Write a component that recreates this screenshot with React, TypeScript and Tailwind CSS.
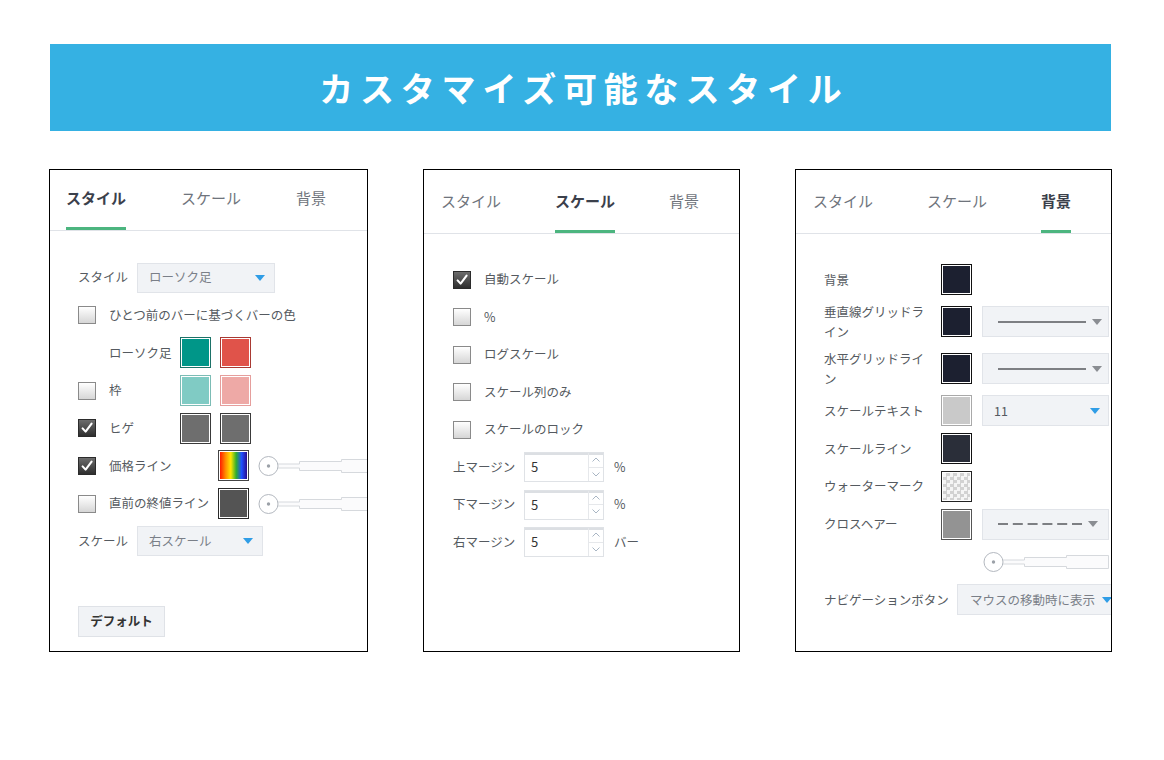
import React from "react";

function Checkbox({ checked }: { checked?: boolean }) {
  if (checked) {
    return (
      <div className="w-[18px] h-[18px] shrink-0 border border-[#2b2b2b] bg-[linear-gradient(to_bottom,#6c6c6c,#2e2e2e)] flex items-center justify-center">
        <svg width="14" height="14" viewBox="0 0 14 14">
          <path d="M2.6 7.4 L5.6 10.6 L11.6 2.6" stroke="#ffffff" strokeWidth="2.1" fill="none" strokeLinecap="round" strokeLinejoin="round" />
        </svg>
      </div>
    );
  }
  return <div className="w-[18px] h-[18px] shrink-0 border border-[#8a8a8a] bg-[linear-gradient(to_bottom,#ffffff,#d6d6d6)]" />;
}

function Swatch({ border, fill }: { border: string; fill: string }) {
  return (
    <div className={`w-[31px] h-[31px] shrink-0 border p-px bg-white ${border}`}>
      <div className={`w-full h-full ${fill}`} />
    </div>
  );
}

function BlueTri() {
  return (
    <svg width="10" height="6" viewBox="0 0 10 6" className="shrink-0">
      <path d="M0 0 H10 L5 6 Z" fill="#2f9de6" />
    </svg>
  );
}

function GrayTri() {
  return (
    <svg width="10" height="6" viewBox="0 0 10 6" className="shrink-0">
      <path d="M0 0 H10 L5 6 Z" fill="#8a8d92" />
    </svg>
  );
}

function Slider() {
  return (
    <svg width="130" height="22" viewBox="0 0 130 22" className="shrink-0">
      <path d="M19.5 9 H41.5 V6.5 H83.5 V4.5 H125.5 V17.5 H83.5 V15.5 H41.5 V13 H19.5" fill="#fbfbfc" stroke="#d6d9dd" />
      <circle cx="10.5" cy="11" r="9.5" fill="#ffffff" stroke="#b3b8bf" />
      <circle cx="10.5" cy="11" r="1.7" fill="#9ca1a8" />
    </svg>
  );
}

function Tabs({ active, tall }: { active: number; tall?: boolean }) {
  const names = ["スタイル", "スケール", "背景"];
  return (
    <div
      className={
        tall
          ? "flex items-start pl-[17px] gap-[54px] pt-[21px] border-b border-[#e0e3e8]"
          : "flex items-start pl-[16px] gap-[55px] pt-[18px] border-b border-[#e0e3e8]"
      }
    >
      {names.map((n, i) => (
        <div key={n} className="flex flex-col">
          <div
            className={
              i === active
                ? "text-[15px] leading-[20px] font-bold text-[#3b404b]"
                : "text-[15px] leading-[20px] text-[#6f747c]"
            }
          >
            {n}
          </div>
          <div className={i === active ? "mt-[19px] h-[3px] bg-[#4cb57f]" : "mt-[19px] h-[3px]"} />
        </div>
      ))}
    </div>
  );
}

function Select({ w, text }: { w: string; text: string }) {
  return (
    <div className={`h-[30px] shrink-0 bg-[#f1f3f6] border border-[#e1e4e9] flex items-center justify-between pl-[11px] pr-[9px] text-[#7a7f88] ${w}`}>
      <span>{text}</span>
      <BlueTri />
    </div>
  );
}

function NumInput() {
  return (
    <div className="w-[80px] h-[30px] shrink-0 border border-[#dfe2e6] shadow-[inset_0_2px_0_#dcdfe3] flex bg-white">
      <div className="flex-1 flex items-center pl-[6px] text-[13px] text-[#333]">5</div>
      <div className="w-[15px] flex flex-col border-l border-[#e6e8eb]">
        <div className="flex-1 flex items-center justify-center border-b border-[#e6e8eb]">
          <svg width="8" height="5" viewBox="0 0 8 5">
            <path d="M0.5 4.5 L4 1 L7.5 4.5" stroke="#a9b6c4" fill="none" strokeWidth="1" />
          </svg>
        </div>
        <div className="flex-1 flex items-center justify-center">
          <svg width="8" height="5" viewBox="0 0 8 5">
            <path d="M0.5 0.5 L4 4 L7.5 0.5" stroke="#a9b6c4" fill="none" strokeWidth="1" />
          </svg>
        </div>
      </div>
    </div>
  );
}

function Panel1() {
  return (
    <div className="w-[319px] h-[483px] shrink-0 border border-black bg-white overflow-hidden">
      <Tabs active={0} />
      <div className="pl-[28px] pt-[31px] flex flex-col gap-[6.7px] text-[12.5px] text-[#555a60]">
        <div className="h-[31px] flex items-center">
          <div className="w-[59px] shrink-0">スタイル</div>
          <Select w="w-[138px]" text="ローソク足" />
        </div>
        <div className="h-[31px] flex items-center">
          <Checkbox />
          <div className="ml-[13px] whitespace-nowrap">ひとつ前のバーに基づくバーの色</div>
        </div>
        <div className="h-[31px] flex items-center">
          <div className="ml-[31px] w-[71px] shrink-0">ローソク足</div>
          <div className="flex gap-[9px]">
            <Swatch border="border-[#1d7268]" fill="bg-[#009688]" />
            <Swatch border="border-[#a93a33]" fill="bg-[#e0534a]" />
          </div>
        </div>
        <div className="h-[31px] flex items-center">
          <Checkbox />
          <div className="ml-[13px] w-[71px] shrink-0">枠</div>
          <div className="flex gap-[9px]">
            <Swatch border="border-[#7cbcb5]" fill="bg-[#80cbc4]" />
            <Swatch border="border-[#e59e9c]" fill="bg-[#eea9a6]" />
          </div>
        </div>
        <div className="h-[31px] flex items-center">
          <Checkbox checked />
          <div className="ml-[13px] w-[71px] shrink-0">ヒゲ</div>
          <div className="flex gap-[9px]">
            <Swatch border="border-[#3a3a3a]" fill="bg-[#6e6e6e]" />
            <Swatch border="border-[#3a3a3a]" fill="bg-[#6e6e6e]" />
          </div>
        </div>
        <div className="h-[31px] flex items-center">
          <Checkbox checked />
          <div className="ml-[13px] w-[109px] shrink-0 whitespace-nowrap">価格ライン</div>
          <Swatch border="border-[#444444]" fill="bg-[linear-gradient(to_right,#ff1a00,#ff8a00,#ffe600,#2fae2f,#1f4fff,#2b0c8c)]" />
          <div className="ml-[9px] shrink-0 flex items-center">
            <Slider />
          </div>
        </div>
        <div className="h-[31px] flex items-center">
          <Checkbox />
          <div className="ml-[13px] w-[109px] shrink-0 whitespace-nowrap">直前の終値ライン</div>
          <Swatch border="border-[#2a2a2a]" fill="bg-[#545454]" />
          <div className="ml-[9px] shrink-0 flex items-center">
            <Slider />
          </div>
        </div>
        <div className="h-[31px] flex items-center">
          <div className="w-[59px] shrink-0">スケール</div>
          <Select w="w-[126px]" text="右スケール" />
        </div>
        <div className="mt-[42px] w-[87px] h-[31px] bg-[#f1f3f6] border border-[#dfe2e7] flex items-center justify-center font-bold text-[#333] text-[12.5px]">
          デフォルト
        </div>
      </div>
    </div>
  );
}

function Panel2() {
  const checks: [string, boolean][] = [
    ["自動スケール", true],
    ["%", false],
    ["ログスケール", false],
    ["スケール列のみ", false],
    ["スケールのロック", false],
  ];
  const inputs: [string, string][] = [
    ["上マージン", "%"],
    ["下マージン", "%"],
    ["右マージン", "バー"],
  ];
  return (
    <div className="w-[317px] h-[483px] shrink-0 border border-black bg-white overflow-hidden">
      <Tabs active={1} tall />
      <div className="pl-[29px] pt-[30.5px] flex flex-col gap-[7.5px] text-[12.5px] text-[#555a60]">
        {checks.map(([t, c]) => (
          <div key={t} className="h-[30px] flex items-center">
            <Checkbox checked={c} />
            <div className="ml-[13px]">{t}</div>
          </div>
        ))}
        {inputs.map(([t, u]) => (
          <div key={t} className="h-[30px] flex items-center">
            <div className="w-[71px] shrink-0">{t}</div>
            <NumInput />
            <div className="ml-[10px]">{u}</div>
          </div>
        ))}
      </div>
    </div>
  );
}

function LineSelect({ dashed }: { dashed?: boolean }) {
  return (
    <div className="ml-[10px] w-[127px] h-[31px] shrink-0 bg-[#f1f3f6] border border-[#e1e4e9] flex items-center pl-[15px] gap-[6px]">
      {dashed ? (
        <svg width="84" height="2" viewBox="0 0 84 2" className="shrink-0">
          <line x1="0" y1="1" x2="84" y2="1" stroke="#7d7f83" strokeWidth="2" strokeDasharray="10 4.8" />
        </svg>
      ) : (
        <div className="w-[88px] h-[2px] shrink-0 bg-[#7d7f83]" />
      )}
      <GrayTri />
    </div>
  );
}

function Panel3() {
  const dark = "border-[#111111]";
  return (
    <div className="w-[317px] h-[483px] shrink-0 border border-black bg-white overflow-hidden">
      <Tabs active={2} tall />
      <div className="pl-[28px] pt-[30px] flex flex-col gap-[6.8px] text-[12.5px] text-[#555a60] leading-[20px]">
        <div className="h-[31px] flex items-center">
          <div className="w-[117px] shrink-0">背景</div>
          <Swatch border={dark} fill="bg-[#1c2030]" />
        </div>
        <div className="h-[40px] flex items-center">
          <div className="w-[105px] mr-[12px] shrink-0">垂直線グリッドライン</div>
          <Swatch border={dark} fill="bg-[#1c2030]" />
          <LineSelect />
        </div>
        <div className="h-[40px] flex items-center">
          <div className="w-[105px] mr-[12px] shrink-0">水平グリッドライン</div>
          <Swatch border={dark} fill="bg-[#1c2030]" />
          <LineSelect />
        </div>
        <div className="h-[31px] flex items-center">
          <div className="w-[117px] shrink-0">スケールテキスト</div>
          <Swatch border="border-[#a9a9a9]" fill="bg-[#c9c9c9]" />
          <div className="ml-[10px] w-[127px] h-[31px] shrink-0 bg-[#f1f3f6] border border-[#e1e4e9] flex items-center justify-between pl-[11px] pr-[8px] text-[#555a60]">
            <span>11</span>
            <BlueTri />
          </div>
        </div>
        <div className="h-[31px] flex items-center">
          <div className="w-[117px] shrink-0">スケールライン</div>
          <Swatch border={dark} fill="bg-[#2a2e39]" />
        </div>
        <div className="h-[31px] flex items-center">
          <div className="w-[117px] shrink-0">ウォーターマーク</div>
          <Swatch border="border-[#222222]" fill="bg-[conic-gradient(#d2d2d2_25%,#f5f5f5_0_50%,#d2d2d2_0_75%,#f5f5f5_0)] bg-[length:7px_7px]" />
        </div>
        <div className="h-[31px] flex items-center">
          <div className="w-[117px] shrink-0">クロスヘアー</div>
          <Swatch border="border-[#555555]" fill="bg-[#939393]" />
          <LineSelect dashed />
        </div>
        <div className="h-[31px] flex items-center pl-[159px]">
          <Slider />
        </div>
        <div className="h-[31px] flex items-center">
          <div className="w-[133px] shrink-0 whitespace-nowrap">ナビゲーションボタン</div>
          <div className="w-[170px] h-[31px] shrink-0 bg-[#f1f3f6] border border-[#e1e4e9] flex items-center pl-[12px] gap-[7px] text-[#7a7f88] whitespace-nowrap">
            <span>マウスの移動時に表示</span>
            <BlueTri />
          </div>
        </div>
      </div>
    </div>
  );
}

export default function App() {
  return (
    <div className="w-[1164px] h-[760px] bg-white pt-[44px] font-['Noto_Sans_CJK_JP','Noto_Sans',sans-serif]">
      <div className="ml-[50px] w-[1061px] h-[87px] bg-[#35b1e3] flex items-center justify-center">
        <span className="text-white text-[34px] font-bold tracking-[6.8px] pl-[6.8px] leading-none">
          カスタマイズ可能なスタイル
        </span>
      </div>
      <div className="mt-[38px] pl-[49px] flex gap-[55px] items-start">
        <Panel1 />
        <Panel2 />
        <Panel3 />
      </div>
    </div>
  );
}
